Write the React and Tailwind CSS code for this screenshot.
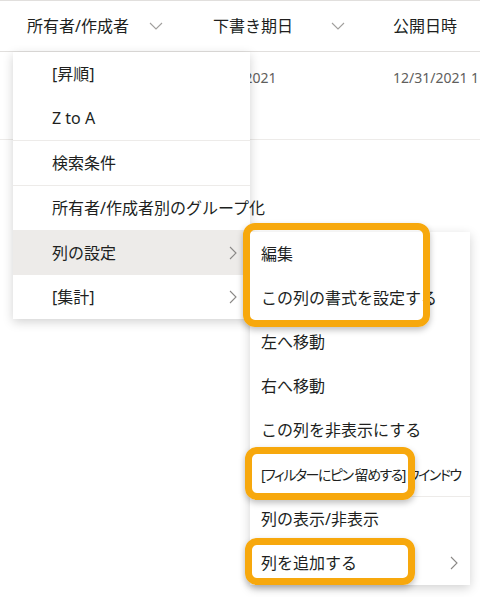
import React from 'react';

const font = { fontFamily: '"Noto Sans", "Noto Sans CJK JP", sans-serif' };

const ChevronDown = ({ className }) => (
  <svg className={className} width="14" height="8" viewBox="0 0 14 8" fill="none">
    <path d="M1 1l6 6 6-6" stroke="#a19f9d" strokeWidth="1.1" />
  </svg>
);

const ChevronRight = ({ className }) => (
  <svg className={className} width="8" height="14" viewBox="0 0 8 14" fill="none">
    <path d="M1 1l6 6-6 6" stroke="#8a8886" strokeWidth="1.1" />
  </svg>
);

const MenuItem = ({ children, active, sub, pad = 'pl-[39px]' }) => (
  <div className={`h-[44px] flex items-center justify-between ${pad} pr-[13px] text-[16px] text-[#201f1e] ${active ? 'bg-[#edebe9]' : ''}`}>
    <span className="whitespace-nowrap">{children}</span>
    {sub && <ChevronRight />}
  </div>
);

const Divider = () => <div className="h-px bg-[#edebe9]" />;

const Highlight = ({ className }) => (
  <div className={`absolute border-[7px] border-[#f7a80d] rounded-[12px] shadow-[0_3px_6px_rgba(0,0,0,0.25)] ${className}`} />
);

export default function App() {
  return (
    <div className="relative w-[480px] h-[597px] bg-white overflow-hidden" style={font}>
      {/* column header */}
      <div className="h-[52px] flex items-center border-t border-b border-[#e1dfdd] text-[16px] text-[#201f1e]">
        <div className="w-[186px] shrink-0 pl-[27px] flex items-center">
          <span>所有者/作成者</span>
          <ChevronDown className="ml-[20px]" />
        </div>
        <div className="w-[180px] shrink-0 pl-[27px] flex items-center">
          <span>下書き期日</span>
          <ChevronDown className="ml-[38px]" />
        </div>
        <div className="pl-[27px] whitespace-nowrap">公開日時</div>
      </div>

      {/* data row */}
      <div className="h-[88px] flex border-b border-[#edebe9] text-[14px] text-[#605e5c] pt-[15px]">
        <div className="w-[186px] shrink-0" />
        <div className="w-[180px] shrink-0 pl-[16px]">12/31/2021</div>
        <div className="pl-[27px] whitespace-nowrap">12/31/2021 1</div>
      </div>

      {/* main context menu */}
      <div className="absolute left-[13px] top-[52px] w-[237px] bg-white shadow-[0_3px_10px_rgba(0,0,0,0.18)]">
        <MenuItem>[昇順]</MenuItem>
        <MenuItem>Z to A</MenuItem>
        <Divider />
        <MenuItem>検索条件</MenuItem>
        <Divider />
        <MenuItem>所有者/作成者別のグループ化</MenuItem>
        <Divider />
        <MenuItem active sub>列の設定</MenuItem>
        <MenuItem sub>[集計]</MenuItem>
      </div>

      {/* submenu */}
      <div className="absolute left-[250px] top-[232px] w-[220px] bg-white shadow-[0_3px_10px_rgba(0,0,0,0.18)]">
        <MenuItem pad="pl-[11px]">編集</MenuItem>
        <MenuItem pad="pl-[11px]">この列の書式を設定する</MenuItem>
        <MenuItem pad="pl-[11px]">左へ移動</MenuItem>
        <MenuItem pad="pl-[11px]">右へ移動</MenuItem>
        <MenuItem pad="pl-[11px]">この列を非表示にする</MenuItem>
        <MenuItem pad="pl-[11px]">
          <span className="text-[14px] tracking-[-1.5px] [font-feature-settings:'palt']">[フィルターにピン 留めする] ウインドウ</span>
        </MenuItem>
        <Divider />
        <MenuItem pad="pl-[11px]">列の表示/非表示</MenuItem>
        <div className="h-[44px] flex items-center justify-between pl-[11px] pr-[12px] text-[16px] text-[#201f1e]">
          <span>列を追加する</span>
          <ChevronRight />
        </div>
      </div>

      {/* callout frames */}
      <Highlight className="left-[243px] top-[223px] w-[187px] h-[104px]" />
      <Highlight className="left-[245px] top-[447px] w-[170px] h-[53px]" />
      <Highlight className="left-[245px] top-[538px] w-[170px] h-[47px]" />
    </div>
  );
}
